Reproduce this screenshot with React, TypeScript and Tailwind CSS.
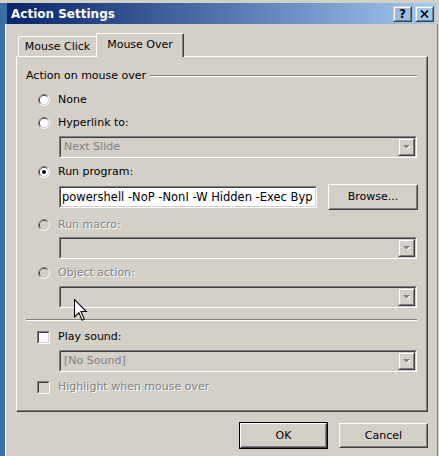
const raisedOuter = "border border-t-[#d4d0c8] border-l-[#d4d0c8] border-r-[#404040] border-b-[#404040]";
const raisedInner = "border border-t-white border-l-white border-r-[#808080] border-b-[#808080]";
const etched = "text-[#808080] [text-shadow:1px_1px_0_#ffffff]";

function Radio({ checked = false, disabled = false }: { checked?: boolean; disabled?: boolean }) {
  return (
    <svg width="12" height="12" viewBox="0 0 12 12" className="shrink-0">
      <path d="M2.11 9.89A5.5 5.5 0 0 1 9.89 2.11" fill="none" stroke="#808080" />
      <path d="M9.89 2.11A5.5 5.5 0 0 1 2.11 9.89" fill="none" stroke="#ffffff" />
      <path d="M2.82 9.18A4.5 4.5 0 0 1 9.18 2.82" fill="none" stroke="#404040" />
      <path d="M9.18 2.82A4.5 4.5 0 0 1 2.82 9.18" fill="none" stroke="#d4d0c8" />
      <circle cx="6" cy="6" r="4" fill={disabled ? "#d4d0c8" : "#ffffff"} />
      {checked && <circle cx="6" cy="6" r="2" fill="#000000" />}
    </svg>
  );
}

function Checkbox({ disabled = false }: { disabled?: boolean }) {
  return (
    <div className="w-[13px] h-[13px] shrink-0 border border-t-[#808080] border-l-[#808080] border-r-white border-b-white">
      <div
        className={
          "h-full border border-t-[#404040] border-l-[#404040] border-r-[#d4d0c8] border-b-[#d4d0c8] " +
          (disabled ? "bg-[#d4d0c8]" : "bg-white")
        }
      />
    </div>
  );
}

function Sunken({ className, inner, children }: { className: string; inner: string; children?: React.ReactNode }) {
  return (
    <div className={"border border-t-[#808080] border-l-[#808080] border-r-white border-b-white " + className}>
      <div className={"h-full border border-t-[#404040] border-l-[#404040] border-r-[#d4d0c8] border-b-[#d4d0c8] " + inner}>
        {children}
      </div>
    </div>
  );
}

function DropButton() {
  return (
    <div className={"w-[17px] h-full " + raisedOuter}>
      <div className={"h-full flex items-center justify-center " + raisedInner}>
        <svg width="8" height="5" viewBox="0 0 8 5">
          <path d="M1 1H8L4.5 4.5Z" fill="#ffffff" />
          <path d="M0 0H7L3.5 3.5Z" fill="#808080" />
        </svg>
      </div>
    </div>
  );
}

function Combo({ text, mt }: { text?: string; mt: string }) {
  return (
    <Sunken className={"ml-[42px] w-[358px] h-[22px] " + mt} inner="flex items-center bg-[#d4d0c8]">
      <span className="flex-1 pl-[3px] text-[#808080] whitespace-nowrap">{text}</span>
      <DropButton />
    </Sunken>
  );
}

function Button({ label, isDefault = false, className = "" }: { label: string; isDefault?: boolean; className?: string }) {
  const body = (
    <div className="h-full border border-t-white border-l-white border-r-[#404040] border-b-[#404040]">
      <div className="h-full flex items-center justify-center border border-t-[#d4d0c8] border-l-[#d4d0c8] border-r-[#808080] border-b-[#808080]">
        {label}
      </div>
    </div>
  );
  if (isDefault) return <div className={"border border-black " + className}>{body}</div>;
  return <div className={className}>{body}</div>;
}

function OptionRow({ label, mt, checked, disabled }: { label: string; mt: string; checked?: boolean; disabled?: boolean }) {
  return (
    <div className={"flex items-center h-[16px] pl-[21px] gap-[8px] " + mt}>
      <Radio checked={checked} disabled={disabled} />
      <span className={disabled ? etched : ""}>{label}</span>
    </div>
  );
}

export default function App() {
  return (
    <div className="w-[439px] h-[456px] bg-[#d4d0c8] flex overflow-hidden relative font-['DejaVu_Sans',sans-serif] text-[11px] leading-[16px] text-black">
      <div className="w-[5px] mt-[3px] bg-[#3a6ea5] shrink-0" />
      <div className="flex-1 flex flex-col pt-[3px]">
        {/* Title bar */}
        <div className="h-[21px] flex border-l-2 border-[#3a6ea5] mr-[3px]">
          <div className="flex-1 flex items-center justify-between pl-[4px] pr-[2px] bg-gradient-to-r from-[#0a246a] to-[#a6caf0]">
            <span className="text-white font-bold text-[12px]">Action Settings</span>
            <div className="flex gap-[3px]">
              <div className={"w-[19px] h-[16px] " + raisedOuter}>
                <div className={"h-full flex items-center justify-center font-bold text-[12px] leading-none " + raisedInner}>?</div>
              </div>
              <div className={"w-[19px] h-[16px] " + raisedOuter}>
                <div className={"h-full flex items-center justify-center " + raisedInner}>
                  <svg width="9" height="8" viewBox="0 0 9 8">
                    <path d="M1 0.5L8 7.5M8 0.5L1 7.5" stroke="#000000" strokeWidth="1.6" />
                  </svg>
                </div>
              </div>
            </div>
          </div>
        </div>

        {/* Client area */}
        <div className="flex-1 border-l border-white border-r border-r-[#808080] mr-[1px]">
          <div className="ml-[10px] mt-[9px] w-[412px]">
            {/* Tabs */}
            <div className="flex items-end h-[23px] pl-[2px] relative z-10">
              <div className="w-[78px] h-[20px] border-t border-l border-white rounded-tl-[2px] flex items-center justify-center pt-[1px]">
                Mouse Click
              </div>
              <div className="w-[88px] h-[24px] -mb-[1px] bg-[#d4d0c8] border-t border-l border-white border-r border-r-[#404040] shadow-[inset_-1px_0_0_#808080] rounded-tl-[2px] rounded-tr-[1px] flex items-start justify-center pt-[3px]">
                Mouse Over
              </div>
            </div>

            {/* Panel */}
            <div className="h-[356px] border-t border-l border-white border-r border-b border-r-[#404040] border-b-[#404040] shadow-[inset_-1px_-1px_0_#808080] flex flex-col">
              <div className="flex items-center h-[14px] mt-[12px] pl-[9px] mr-[10px] gap-[4px]">
                <span>Action on mouse over</span>
                <div className="flex-1 h-[2px] border-t border-[#808080] border-b border-b-white" />
              </div>

              <OptionRow label="None" mt="mt-[9px]" />
              <OptionRow label="Hyperlink to:" mt="mt-[7px]" />
              <Combo text="Next Slide" mt="mt-[5px]" />

              <OptionRow label="Run program:" mt="mt-[6px]" checked />
              <div className="flex items-center h-[26px] mt-[4px] ml-[42px] gap-[11px]">
                <Sunken className="w-[258px] h-[22px]" inner="bg-white flex items-center overflow-hidden">
                  <span className="pl-[1px] whitespace-nowrap text-[11.5px]">powershell -NoP -NonI -W Hidden -Exec Byp</span>
                </Sunken>
                <Button label="Browse..." className="w-[90px] h-[26px]" />
              </div>

              <OptionRow label="Run macro:" mt="mt-[7px]" disabled />
              <Combo mt="mt-[4px]" />

              <OptionRow label="Object action:" mt="mt-[6px]" disabled />
              <Combo mt="mt-[5px]" />

              <div className="mt-[11px] ml-[9px] mr-[10px] h-[2px] border-t border-[#808080] border-b border-b-white" />

              <div className="flex items-center h-[16px] mt-[8px] pl-[20px] gap-[8px]">
                <Checkbox />
                <span>Play sound:</span>
              </div>
              <Combo text="[No Sound]" mt="mt-[5px]" />

              <div className="flex items-center h-[16px] mt-[7px] pl-[20px] gap-[8px]">
                <Checkbox disabled />
                <span className={etched}>Highlight when mouse over</span>
              </div>
            </div>

            {/* Buttons */}
            <div className="flex justify-end items-center gap-[11px] mt-[10px]">
              <Button label="OK" isDefault className="w-[89px] h-[27px]" />
              <Button label="Cancel" className="w-[89px] h-[25px]" />
            </div>
          </div>
        </div>
      </div>

      {/* Mouse pointer */}
      <svg width="14" height="23" viewBox="0 0 13 21" className="absolute left-[74px] top-[299px]">
        <path d="M0.5 0.5V16.5L4.5 12.5L7.5 19.5L9.5 18.5L6.5 11.5H11.5Z" fill="#ffffff" stroke="#000000" strokeWidth="1" />
      </svg>
    </div>
  );
}
